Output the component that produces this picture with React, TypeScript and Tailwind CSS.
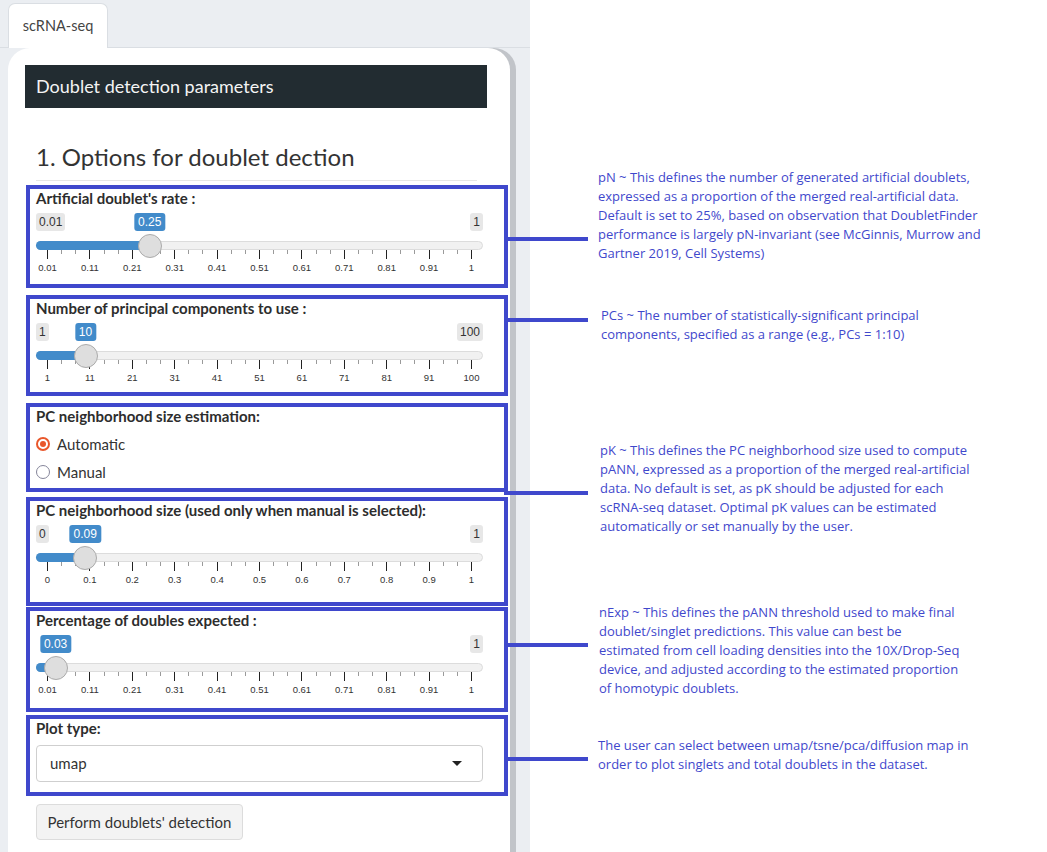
import React from 'react';

interface SliderProps {
  min: number;
  max: number;
  value: number;
  ticks: string[];
  minLabel?: string;
  maxLabel: string;
  badge: string;
}

// grid runs from 11px to 435px inside the 447px wide track
const GRID_LEFT = 11;
const GRID_WIDTH = 424;

function RangeSlider({ min, max, value, ticks, minLabel, maxLabel, badge }: SliderProps) {
  const frac = (value - min) / (max - min);
  const handleX = GRID_LEFT + frac * GRID_WIDTH;
  const step = GRID_WIDTH / (ticks.length - 1);

  return (
    <div className="relative h-[66px] w-[447px] font-['Liberation_Sans',Arial,sans-serif]">
      {/* min / max labels */}
      {minLabel && (
        <span className="absolute left-0 top-0 h-[18px] px-[3px] leading-[18px] text-[12px] text-[#333] bg-[#e7e7e7] rounded-[3px]">
          {minLabel}
        </span>
      )}
      <span className="absolute right-0 top-0 h-[18px] px-[3px] leading-[18px] text-[12px] text-[#333] bg-[#e7e7e7] rounded-[3px]">
        {maxLabel}
      </span>
      {/* current value */}
      <span
        className="absolute top-0 h-[18px] px-[4px] leading-[18px] text-[12px] text-white bg-[#428bca] rounded-[3px] -translate-x-1/2"
        style={{ left: handleX }}
      >
        {badge}
      </span>

      {/* track */}
      <div className="absolute left-0 right-0 top-[28px] h-[9px] rounded-full bg-[#f1f1f1] border border-[#dcdcdc]" />
      <div className="absolute left-0 top-[28px] h-[9px] rounded-l-full bg-[#428bca]" style={{ width: handleX }} />

      {/* grid */}
      {ticks.map((t, i) => {
        const x = GRID_LEFT + i * step;
        return (
          <React.Fragment key={t}>
            <span className="absolute top-[37px] h-[9px] w-px bg-[#222]" style={{ left: x }} />
            {i < ticks.length - 1 && (
              <>
                <span className="absolute top-[37px] h-[4px] w-px bg-[#9a9a9a]" style={{ left: x + step / 3 }} />
                <span className="absolute top-[37px] h-[4px] w-px bg-[#9a9a9a]" style={{ left: x + (2 * step) / 3 }} />
              </>
            )}
            <span
              className="absolute top-[49px] leading-[12px] text-[9.5px] text-[#333] -translate-x-1/2"
              style={{ left: x + 0.5 }}
            >
              {t}
            </span>
          </React.Fragment>
        );
      })}

      {/* handle */}
      <span
        className="absolute top-[21px] h-[24px] w-[24px] -translate-x-1/2 rounded-full bg-[#dedede] border border-[#ababab]"
        style={{ left: handleX }}
      />
    </div>
  );
}

const rateTicks = ['0.01', '0.11', '0.21', '0.31', '0.41', '0.51', '0.61', '0.71', '0.81', '0.91', '1'];
const pcTicks = ['1', '11', '21', '31', '41', '51', '61', '71', '81', '91', '100'];
const pkTicks = ['0', '0.1', '0.2', '0.3', '0.4', '0.5', '0.6', '0.7', '0.8', '0.9', '1'];

const notes: { lines: string[]; className: string }[] = [
  {
    className: 'mt-[168px] pl-[68px]',
    lines: [
      'pN ~ This defines the number of generated artificial doublets,',
      'expressed as a proportion of the merged real-artificial data.',
      'Default is set to 25%, based on observation that DoubletFinder',
      'performance is largely pN-invariant (see McGinnis, Murrow and',
      'Gartner 2019, Cell Systems)',
    ],
  },
  {
    className: 'mt-[43px] pl-[71px]',
    lines: [
      'PCs ~ The number of statistically-significant principal',
      'components, specified as a range (e.g., PCs = 1:10)',
    ],
  },
  {
    className: 'mt-[97px] pl-[70px]',
    lines: [
      'pK ~ This defines the PC neighborhood size used to compute',
      'pANN, expressed as a proportion of the merged real-artificial',
      'data. No default is set, as pK should be adjusted for each',
      'scRNA-seq dataset. Optimal pK values can be estimated',
      'automatically or set manually by the user.',
    ],
  },
  {
    className: 'mt-[67px] pl-[69px]',
    lines: [
      'nExp ~ This defines the pANN threshold used to make final',
      'doublet/singlet predictions. This value can best be',
      'estimated from cell loading densities into the 10X/Drop-Seq',
      'device, and adjusted according to the estimated proportion',
      'of homotypic doublets.',
    ],
  },
  {
    className: 'mt-[38px] pl-[68px]',
    lines: [
      'The user can select between umap/tsne/pca/diffusion map in',
      'order to plot singlets and total doublets in the dataset.',
    ],
  },
];

const connectors = [237, 318, 491, 643, 757];

function Label({ children }: { children: React.ReactNode }) {
  return <div className="h-[18px] leading-[18px] text-[15px] font-bold text-[#2d2d2d]">{children}</div>;
}

export default function App() {
  return (
    <div className="relative flex h-[852px] w-[1047px] overflow-hidden bg-white font-['Lato',sans-serif]">
      {/* Sidebar */}
      <div className="flex w-[530px] shrink-0 flex-col bg-[#ebeef2]">
        {/* Tab bar */}
        <div className="flex h-[48px] border-b border-[#dadee3] pl-[8px] pt-[3px]">
          <div className="-mb-px flex h-[45px] w-[100px] items-center justify-center rounded-t-[7px] border border-b-0 border-[#dadee3] bg-white text-[14.5px] text-[#444]">
            scRNA-seq
          </div>
        </div>

        {/* Panel */}
        <div className="ml-[8px] w-[502px] flex-1 rounded-t-[22px] bg-white pt-[17px] shadow-[6px_0_0_0_#c1c4c9]">
          <div className="ml-[17px] flex h-[43px] w-[462px] items-center bg-[#222c31] pl-[11px] text-[18px] text-[#f4f4f4]">
            Doublet detection parameters
          </div>

          <div className="pl-[28px]">
            <h2 className="mt-[33px] text-[24px] leading-[31px] font-normal text-[#333]">1. Options for doublet dection</h2>
            <hr className="mt-[8px] w-[441px] border-t border-[#e6e6e6]" />

            {/* pN */}
            <div className="-ml-[10px] mt-[4px] w-[482px] border-4 border-[#3f48cc] pl-[6px] pb-[5px]">
              <Label>Artificial doublet's rate :</Label>
              <div className="mt-[6px]">
                <RangeSlider min={0.01} max={1} value={0.25} ticks={rateTicks} minLabel="0.01" maxLabel="1" badge="0.25" />
              </div>
            </div>

            {/* PCs */}
            <div className="-ml-[10px] mt-[7px] w-[482px] border-4 border-[#3f48cc] pl-[6px] pb-[3px]">
              <Label>Number of principal components to use :</Label>
              <div className="mt-[6px]">
                <RangeSlider min={1} max={100} value={10} ticks={pcTicks} minLabel="1" maxLabel="100" badge="10" />
              </div>
            </div>

            {/* pK estimation */}
            <div className="-ml-[10px] mt-[7px] w-[482px] border-4 border-[#3f48cc] pl-[6px] pb-[6px]">
              <Label>PC neighborhood size estimation:</Label>
              <div className="mt-[9px] flex h-[20px] items-center gap-[7px] text-[15px] text-[#333]">
                <span className="flex h-[14px] w-[14px] items-center justify-center rounded-full border-2 border-[#e9572b]">
                  <span className="h-[6px] w-[6px] rounded-full bg-[#e9572b]" />
                </span>
                Automatic
              </div>
              <div className="mt-[8px] flex h-[20px] items-center gap-[7px] text-[15px] text-[#333]">
                <span className="h-[14px] w-[14px] rounded-full border-[1.5px] border-[#85859a]" />
                Manual
              </div>
            </div>

            {/* pK */}
            <div className="-ml-[10px] mt-[5px] w-[482px] border-4 border-[#3f48cc] pl-[6px] pb-[11px]">
              <Label>PC neighborhood size (used only when manual is selected):</Label>
              <div className="mt-[6px]">
                <RangeSlider min={0} max={1} value={0.09} ticks={pkTicks} minLabel="0" maxLabel="1" badge="0.09" />
              </div>
            </div>

            {/* nExp */}
            <div className="-ml-[10px] mt-px w-[482px] border-4 border-[#3f48cc] pl-[6px] pb-[7px]">
              <Label>Percentage of doubles expected :</Label>
              <div className="mt-[6px]">
                <RangeSlider min={0.01} max={1} value={0.03} ticks={rateTicks} maxLabel="1" badge="0.03" />
              </div>
            </div>

            {/* Plot type */}
            <div className="-ml-[10px] mt-[3px] w-[482px] border-4 border-[#3f48cc] pl-[6px] pb-[10px]">
              <Label>Plot type:</Label>
              <div className="mt-[8px] flex h-[37px] w-[447px] items-center justify-between rounded-[4px] border border-[#cfcfcf] pl-[13px] pr-[20px] text-[15px] text-[#333]">
                <span>umap</span>
                <span className="h-0 w-0 border-x-[5px] border-t-[5px] border-x-transparent border-t-[#222]" />
              </div>
            </div>

            <button className="mt-[8px] h-[36px] w-[207px] rounded-[4px] border border-[#dcdcdc] bg-[#f3f3f3] text-[15px] text-[#333]">
              Perform doublets' detection
            </button>
          </div>
        </div>
      </div>

      {/* Annotations */}
      <div className="flex flex-1 flex-col font-['Open_Sans',sans-serif] text-[13px] leading-[19px] text-[#3f48cc]">
        {notes.map((n, i) => (
          <div key={i} className={n.className}>
            {n.lines.map((l) => (
              <div key={l} className="whitespace-nowrap">
                {l}
              </div>
            ))}
          </div>
        ))}
      </div>

      {connectors.map((y) => (
        <span key={y} className="absolute left-[504px] h-[4px] w-[84px] bg-[#3f48cc]" style={{ top: y }} />
      ))}
    </div>
  );
}
